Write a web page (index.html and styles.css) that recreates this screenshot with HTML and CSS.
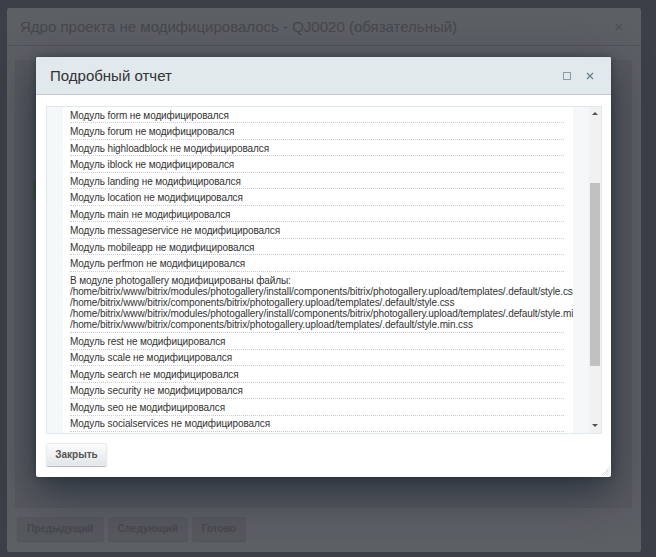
FILE: index.html
```
<!DOCTYPE html>
<html lang="ru">
<head>
    <meta charset="UTF-8">
    <title>Подробный отчет</title>
    <link rel="stylesheet" href="styles.css">
</head>
<body>
<div class="wizard">
    <div class="wizard-head">
        <span class="wizard-title">Ядро проекта не модифицировалось - QJ0020 (обязательный)</span>
        <span class="wizard-close">&times;</span>
    </div>
    <div class="wizard-body">
        <div class="wizard-panel">
            <span class="wizard-run"></span>
        </div>
    </div>
    <div class="wizard-foot">
        <span class="wbtn">Предыдущий</span>
        <span class="wbtn">Следующий</span>
        <span class="wbtn">Готово</span>
    </div>
</div>

<div class="dialog">
    <div class="dialog-head">
        <span class="dialog-title">Подробный отчет</span>
        <span class="dialog-tools">
            <span class="tool-max"></span>
            <svg class="tool-close" viewBox="0 0 8 8" width="8" height="8"><path d="M1 1L7 7M7 1L1 7" stroke="#6e7c89" stroke-width="1.3"/></svg>
        </span>
    </div>
    <div class="dialog-body">
        <div class="report">
            <div class="report-side"></div>
            <div class="report-main">
                <div class="row">Модуль form не модифицировался</div>
                <div class="row">Модуль forum не модифицировался</div>
                <div class="row">Модуль highloadblock не модифицировался</div>
                <div class="row">Модуль iblock не модифицировался</div>
                <div class="row">Модуль landing не модифицировался</div>
                <div class="row">Модуль location не модифицировался</div>
                <div class="row">Модуль main не модифицировался</div>
                <div class="row">Модуль messageservice не модифицировался</div>
                <div class="row">Модуль mobileapp не модифицировался</div>
                <div class="row">Модуль perfmon не модифицировался</div>
                <div class="row">В модуле photogallery модифицированы файлы:<br>/home/bitrix/www/bitrix/modules/photogallery/install/components/bitrix/photogallery.upload/templates/.default/style.css<br>/home/bitrix/www/bitrix/components/bitrix/photogallery.upload/templates/.default/style.css<br>/home/bitrix/www/bitrix/modules/photogallery/install/components/bitrix/photogallery.upload/templates/.default/style.min.css<br>/home/bitrix/www/bitrix/components/bitrix/photogallery.upload/templates/.default/style.min.css</div>
                <div class="row">Модуль rest не модифицировался</div>
                <div class="row">Модуль scale не модифицировался</div>
                <div class="row">Модуль search не модифицировался</div>
                <div class="row">Модуль security не модифицировался</div>
                <div class="row">Модуль seo не модифицировался</div>
                <div class="row">Модуль socialservices не модифицировался</div>
            </div>
            <div class="report-side report-side-r"></div>
            <div class="scroll">
                <span class="scroll-up"></span>
                <span class="scroll-thumb"></span>
                <span class="scroll-down"></span>
            </div>
        </div>
        <div class="dialog-foot">
            <span class="btn">Закрыть</span>
        </div>
        <svg class="grip" viewBox="0 0 10 10" width="10" height="10">
            <path d="M9.5 1.5L1.5 9.5M9.5 3.5L3.5 9.5M9.5 5.5L5.5 9.5M9.5 7.5L7.5 9.5" stroke="#b9bbbd" stroke-width="1" stroke-dasharray="1 1"/>
        </svg>
    </div>
</div>
</body>
</html>
```

FILE: styles.css
```
html, body {
    margin: 0;
    padding: 0;
}
body {
    width: 656px;
    height: 557px;
    overflow: hidden;
    background: #3b3f47;
    font-family: "Liberation Sans", Arial, sans-serif;
    position: relative;
}

/* задний мастер, затемнен оверлеем */
.wizard {
    margin: 8px 0 0 7px;
    width: 634px;
    height: 544px;
    background: #5c5f64;
    border-radius: 2px;
    display: flex;
    flex-direction: column;
}
.wizard-head {
    height: 37px;
    border-bottom: 1px solid #505358;
    display: flex;
    align-items: center;
    justify-content: space-between;
    padding: 0 18px 0 13px;
}
.wizard-title {
    font-size: 15px;
    color: #45484d;
}
.wizard-close {
    font-size: 15px;
    color: #4d5055;
}
.wizard-body {
    flex: 1;
    padding: 14px 9px 9px 8px;
    display: flex;
}
.wizard-panel {
    flex: 1;
    background: #57595f;
    border: 1px solid #55585d;
    position: relative;
}
.wizard-run {
    position: absolute;
    left: 17px;
    top: 118px;
    width: 8px;
    height: 20px;
    background: #3e5a3a;
}
.wizard-foot {
    height: 35px;
    padding: 0 0 0 10px;
    display: flex;
    gap: 4px;
    align-items: flex-start;
}
.wbtn {
    height: 24px;
    line-height: 24px;
    padding: 0 10px;
    font-size: 10px;
    font-weight: bold;
    color: #45484d;
    background: #55585d;
    border-radius: 3px;
    box-shadow: 0 1px 1px rgba(0, 0, 0, .15);
}

/* подробный отчет */
.dialog {
    position: absolute;
    left: 36px;
    top: 57px;
    width: 575px;
    height: 420px;
    background: #fff;
    border-radius: 2px;
    box-shadow: 0 14px 40px rgba(28, 38, 50, .8), 0 0 6px rgba(20, 26, 34, .4);
    display: flex;
    flex-direction: column;
}
.dialog-head {
    height: 37px;
    background: #e1e9ec;
    border-bottom: 1px solid #c3c9cc;
    border-radius: 2px 2px 0 0;
    display: flex;
    align-items: center;
    justify-content: space-between;
    padding: 0 17px 0 14px;
}
.dialog-title {
    font-size: 15px;
    color: #333;
}
.dialog-tools {
    display: flex;
    align-items: center;
    gap: 15px;
}
.tool-max {
    width: 6px;
    height: 6px;
    border: 1px solid #8e9aa5;
}
.dialog-body {
    flex: 1;
    padding: 11px 9px 0 10px;
    position: relative;
}
.report {
    height: 326px;
    border: 1px solid #dfe8ec;
    display: flex;
    overflow: hidden;
}
.report-side {
    width: 16px;
    background: #f4f8f9;
}
.report-side-r {
    width: 16px;
}
.report-main {
    width: 503px;
    padding-left: 7px;
    overflow: hidden;
    font-size: 10px;
    letter-spacing: -.1px;
    color: #333;
}
.row {
    margin-right: 9px;
    padding: 2.7px 0 1.6px;
    line-height: 11.2px;
    white-space: nowrap;
    border-bottom: 1px dotted #c9cbd9;
}
.scroll {
    width: 12px;
    background: #f1f1f1;
    position: relative;
}
.scroll-thumb {
    position: absolute;
    left: 1px;
    right: 1px;
    top: 76px;
    height: 183px;
    background: #c1c1c1;
}
.scroll-up, .scroll-down {
    position: absolute;
    left: 3px;
    width: 0;
    height: 0;
    border-left: 3px solid transparent;
    border-right: 3px solid transparent;
}
.scroll-up {
    top: 5px;
    border-bottom: 3px solid #505050;
}
.scroll-down {
    bottom: 6px;
    border-top: 3px solid #505050;
}
.dialog-foot {
    padding-top: 9px;
    display: flex;
}
.btn {
    width: 61px;
    height: 23px;
    line-height: 23px;
    text-align: center;
    font-size: 10px;
    font-weight: bold;
    color: #555;
    border-radius: 3px;
    background: linear-gradient(#fdfdfd, #e2e6e8);
    box-shadow: 0 1px 1px rgba(0, 0, 0, .3), inset 0 0 0 1px #e9ecee;
}
.grip {
    position: absolute;
    right: 1px;
    bottom: 1px;
}
```
